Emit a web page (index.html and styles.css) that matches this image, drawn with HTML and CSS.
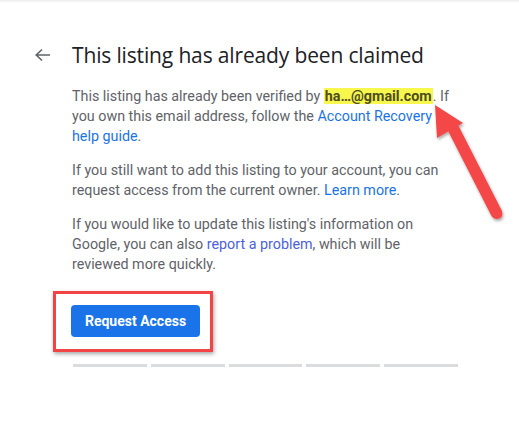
FILE: index.html
```html
<!DOCTYPE html>
<html>
<head>
<meta charset="utf-8">
<link rel="stylesheet" href="styles.css">
</head>
<body>
<div class="topshade"></div>
<main class="page">
  <div class="header">
    <button class="back" aria-label="Back">
      <svg width="18" height="14" viewBox="0 0 18 14"><path d="M16 7H2.5M8 1.5L2.2 7L8 12.5" fill="none" stroke="#5f6368" stroke-width="1.6"/></svg>
    </button>
    <h1 class="title">This listing has already been claimed</h1>
  </div>
  <div class="content">
    <p>This listing has already been verified by <b class="mark">ha…@gmail.com</b>. If you own this email address, follow the <a href="#">Account Recovery help guide</a>.</p>
    <p>If you still want to add this listing to your account, you can request access from the current owner. <a href="#">Learn more</a>.</p>
    <p>If you would like to update this listing's information on Google, you can also <a href="#" class="visited">report a problem</a>, which will be reviewed more quickly.</p>
    <div class="actions">
      <button class="primary">Request Access</button>
    </div>
    <div class="progress">
      <span></span><span></span><span></span><span></span><span></span>
    </div>
  </div>
</main>
<div class="redbox"></div>
<svg class="redarrow" width="519" height="445" viewBox="0 0 519 445">
  <defs>
    <filter id="sh" x="-20%" y="-20%" width="140%" height="140%">
      <feDropShadow dx="1" dy="2" stdDeviation="1.5" flood-color="#000" flood-opacity="0.35"/>
    </filter>
  </defs>
  <g filter="url(#sh)" fill="#f44646">
    <path d="M435 105 L463 123 L437 138 Z"/>
    <path d="M445 125 L455 119 L502 211 Q504 218 497 219 Q493 219 491 215 Z"/>
  </g>
</svg>
</body>
</html>
```
FILE: styles.css
```css
html, body {
  margin: 0;
  padding: 0;
  background: #fff;
}
body {
  width: 519px;
  height: 445px;
  overflow: hidden;
  position: relative;
  font-family: Roboto, "Liberation Sans", Arial, sans-serif;
}
.topshade {
  height: 3px;
  background: linear-gradient(#ececec, #fff);
}
.page {
  padding-top: 38px;
}
.header {
  display: flex;
  align-items: center;
  height: 28px;
}
.back {
  width: 72px;
  height: 28px;
  padding: 0 0 0 34px;
  border: 0;
  background: none;
  display: flex;
  align-items: center;
}
.title {
  margin: 0;
  font-family: "Open Sans", Roboto, sans-serif;
  font-weight: 400;
  font-size: 21px;
  line-height: 28px;
  color: #202124;
  letter-spacing: -0.15px;
}
.content {
  padding-left: 72px;
  width: 382px;
  padding-top: 17px;
}
.content p {
  margin: 0 0 14px;
  font-size: 14.3px;
  line-height: 20px;
  color: #5f6368;
}
.content a {
  color: #1a73e8;
  text-decoration: none;
}
.content a.visited {
  color: #4b5fe0;
}
.mark {
  background: #f8f74e;
  color: #4d4d20;
  font-weight: 700;
  padding: 0 1px;
}
.actions {
  padding-top: 17px;
}
.primary {
  width: 129px;
  height: 32px;
  border: 0;
  border-radius: 4px;
  background: #1a73e8;
  color: #fff;
  font-family: Roboto, sans-serif;
  font-weight: 700;
  font-size: 14px;
  margin-left: -1px;
}
.progress {
  display: flex;
  gap: 4px;
  margin-top: 27px;
  margin-left: 1px;
  width: 385px;
}
.progress span {
  flex: 1;
  height: 3px;
  background: #dadce0;
}
.redbox {
  position: absolute;
  left: 53px;
  top: 291px;
  width: 154px;
  height: 55px;
  border: 3px solid #f24444;
  box-shadow: 1px 2px 4px rgba(0,0,0,0.35);
}
.redarrow {
  position: absolute;
  left: 0;
  top: 0;
  pointer-events: none;
}
```
